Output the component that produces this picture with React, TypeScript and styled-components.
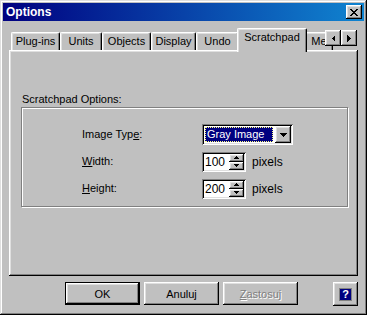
import styled, { createGlobalStyle, css } from 'styled-components'

const GlobalStyle = createGlobalStyle`
	html, body {
		margin: 0;
		padding: 0;
		background: #c0c0c0;
	}
	body {
		font-family: 'Liberation Sans', Arial, sans-serif;
		font-size: 11px;
		color: #000;
	}
`

const raised = css`
	box-shadow: inset -1px -1px #000, inset 1px 1px #fff, inset -2px -2px #808080, inset 2px 2px #dfdfdf;
`

const sunken = css`
	box-shadow: inset 1px 1px #808080, inset -1px -1px #fff, inset 2px 2px #000, inset -2px -2px #dfdfdf;
`

const tabs = [
	{ label: 'Plug-ins', width: 49 },
	{ label: 'Units', width: 42 },
	{ label: 'Objects', width: 49 },
	{ label: 'Display', width: 45 },
	{ label: 'Undo', width: 43 },
	{ label: 'Scratchpad', width: 66, active: true },
	{ label: 'Me', width: 28 },
]

export default function App() {
	return (
		<>
			<GlobalStyle />
			<Window>
				<TitleBar>
					<Title>Options</Title>
					<CloseButton>
						<svg width='8' height='7' viewBox='0 0 8 7' shapeRendering='crispEdges'>
							<path
								d='M0 0h2v1h-2zM6 0h2v1h-2zM1 1h2v1h-2zM5 1h2v1h-2zM2 2h4v1h-4zM3 3h2v1h-2zM2 4h4v1h-4zM1 5h2v1h-2zM5 5h2v1h-2zM0 6h2v1h-2zM6 6h2v1h-2z'
								fill='#000'
							/>
						</svg>
					</CloseButton>
				</TitleBar>
				<Content>
					<TabStrip>
						{tabs.map((t) => (
							<Tab key={t.label} $w={t.width} $active={t.active}>
								{t.label}
							</Tab>
						))}
						<ScrollArrows>
							<ArrowButton>
								<svg width='4' height='7' viewBox='0 0 4 7' shapeRendering='crispEdges'>
									<polygon points='4,0 4,7 0.5,3.5' fill='#000' />
								</svg>
							</ArrowButton>
							<ArrowButton>
								<svg width='4' height='7' viewBox='0 0 4 7' shapeRendering='crispEdges'>
									<polygon points='0,0 0,7 3.5,3.5' fill='#000' />
								</svg>
							</ArrowButton>
						</ScrollArrows>
					</TabStrip>
					<TabPanel>
						<GroupLabel>Scratchpad Options:</GroupLabel>
						<GroupBox>
							<FieldGrid>
								<FieldLabel>
									Image Typ<u>e</u>:
								</FieldLabel>
								<Combo>
									<ComboValue>Gray Image</ComboValue>
									<DropButton>
										<svg width='7' height='4' viewBox='0 0 7 4' shapeRendering='crispEdges'>
											<polygon points='0,0 7,0 3.5,4' fill='#000' />
										</svg>
									</DropButton>
								</Combo>
								<FieldLabel>
									<u>W</u>idth:
								</FieldLabel>
								<SpinRow>
									<Spinner>
										<SpinValue>100</SpinValue>
										<SpinButtons>
											<SpinHalf>
												<svg width='5' height='3' viewBox='0 0 5 3' shapeRendering='crispEdges'>
													<polygon points='2.5,0 5,3 0,3' fill='#000' />
												</svg>
											</SpinHalf>
											<SpinHalf>
												<svg width='5' height='3' viewBox='0 0 5 3' shapeRendering='crispEdges'>
													<polygon points='0,0 5,0 2.5,3' fill='#000' />
												</svg>
											</SpinHalf>
										</SpinButtons>
									</Spinner>
									<Unit>pixels</Unit>
								</SpinRow>
								<FieldLabel>
									<u>H</u>eight:
								</FieldLabel>
								<SpinRow>
									<Spinner>
										<SpinValue>200</SpinValue>
										<SpinButtons>
											<SpinHalf>
												<svg width='5' height='3' viewBox='0 0 5 3' shapeRendering='crispEdges'>
													<polygon points='2.5,0 5,3 0,3' fill='#000' />
												</svg>
											</SpinHalf>
											<SpinHalf>
												<svg width='5' height='3' viewBox='0 0 5 3' shapeRendering='crispEdges'>
													<polygon points='0,0 5,0 2.5,3' fill='#000' />
												</svg>
											</SpinHalf>
										</SpinButtons>
									</Spinner>
									<Unit>pixels</Unit>
								</SpinRow>
							</FieldGrid>
						</GroupBox>
					</TabPanel>
					<ButtonRow>
						<PushButton $default>OK</PushButton>
						<PushButton>Anuluj</PushButton>
						<PushButton $disabled>
							<u>Z</u>astosuj
						</PushButton>
						<HelpButton>
							<HelpGlyph>?</HelpGlyph>
						</HelpButton>
					</ButtonRow>
				</Content>
			</Window>
		</>
	)
}

const Window = styled.div`
	width: 367px;
	height: 315px;
	box-sizing: border-box;
	padding: 3px;
	background: #c0c0c0;
	display: flex;
	flex-direction: column;
	box-shadow: inset -1px -1px #000, inset 1px 1px #dfdfdf, inset -2px -2px #808080, inset 2px 2px #fff;
`

const TitleBar = styled.div`
	height: 18px;
	display: flex;
	align-items: center;
	padding: 0 2px 0 3px;
	background: linear-gradient(90deg, #000080, #1084d0);
`

const Title = styled.span`
	color: #fff;
	font-weight: bold;
	font-size: 12px;
`

const CloseButton = styled.div`
	margin-left: auto;
	width: 16px;
	height: 14px;
	background: #c0c0c0;
	display: flex;
	align-items: center;
	justify-content: center;
	${raised}
`

const Content = styled.div`
	flex: 1;
	display: flex;
	flex-direction: column;
	padding: 7px 6px 0;
`

const TabStrip = styled.div`
	position: relative;
	z-index: 1;
	height: 24px;
	margin-bottom: -2px;
	display: flex;
	align-items: flex-start;
	padding-left: 2px;
	overflow: hidden;
`

const Tab = styled.div<{ $w: number; $active?: boolean }>`
	flex: none;
	box-sizing: border-box;
	width: ${({ $w, $active }) => ($active ? $w + 4 : $w)}px;
	height: ${({ $active }) => ($active ? 24 : 18)}px;
	margin-top: ${({ $active }) => ($active ? 0 : 4)}px;
	margin-left: ${({ $active }) => ($active ? -2 : 0)}px;
	margin-right: ${({ $active }) => ($active ? -2 : 0)}px;
	position: relative;
	z-index: ${({ $active }) => ($active ? 2 : 1)};
	background: #c0c0c0;
	border-left: 1px solid #fff;
	border-top: 1px solid #fff;
	border-right: 1px solid #000;
	border-radius: 2px 2px 0 0;
	box-shadow: inset -1px 0 #808080, inset 1px 1px #dfdfdf;
	text-align: center;
	padding-top: 2px;
	line-height: 13px;
	white-space: nowrap;
`

const ScrollArrows = styled.div`
	position: absolute;
	right: 1px;
	top: 2px;
	z-index: 3;
	display: flex;
`

const ArrowButton = styled.div`
	width: 16px;
	height: 16px;
	background: #c0c0c0;
	display: flex;
	align-items: center;
	justify-content: center;
	${raised}
`

const TabPanel = styled.div`
	box-sizing: border-box;
	height: 226px;
	padding: 43px 10px 0 12px;
	box-shadow: inset -1px -1px #000, inset 1px 1px #fff, inset -2px -2px #808080, inset 2px 2px #dfdfdf;
`

const GroupLabel = styled.div`
	line-height: 13px;
	margin-bottom: 1px;
	padding-left: 1px;
`

const GroupBox = styled.div`
	box-sizing: border-box;
	height: 100px;
	border: 1px solid #808080;
	box-shadow: inset 1px 1px #fff, 1px 1px #fff;
	padding: 16px 0 0 60px;
`

const FieldGrid = styled.div`
	display: grid;
	grid-template-columns: 120px auto;
	grid-auto-rows: 21px;
	row-gap: 6px;
	align-items: center;
	justify-items: start;
`

const FieldLabel = styled.div`
	line-height: 13px;
`

const Combo = styled.div`
	box-sizing: border-box;
	width: 91px;
	height: 21px;
	padding: 2px;
	background: #fff;
	display: flex;
	${sunken}
`

const ComboValue = styled.div`
	flex: 1;
	margin: 1px 2px 1px 1px;
	box-sizing: border-box;
	background: #000080;
	color: #fff;
	border: 1px dotted #ffff80;
	padding-left: 1px;
	line-height: 13px;
`

const DropButton = styled.div`
	width: 16px;
	height: 17px;
	background: #c0c0c0;
	display: flex;
	align-items: center;
	justify-content: center;
	${raised}
`

const SpinRow = styled.div`
	display: flex;
	align-items: center;
`

const Spinner = styled.div`
	box-sizing: border-box;
	width: 44px;
	height: 20px;
	padding: 2px;
	background: #fff;
	display: flex;
	${sunken}
`

const SpinValue = styled.div`
	flex: 1;
	padding-left: 1px;
	font-size: 12px;
	line-height: 16px;
`

const SpinButtons = styled.div`
	width: 15px;
	display: flex;
	flex-direction: column;
`

const SpinHalf = styled.div`
	flex: 1;
	background: #c0c0c0;
	display: flex;
	align-items: center;
	justify-content: center;
	${raised}
`

const Unit = styled.span`
	margin-left: 6px;
	font-size: 12px;
`

const ButtonRow = styled.div`
	display: flex;
	gap: 4px;
	margin-top: 6px;
	padding-left: 56px;
`

const PushButton = styled.div<{ $default?: boolean; $disabled?: boolean }>`
	box-sizing: border-box;
	width: 75px;
	height: 23px;
	background: #c0c0c0;
	display: flex;
	align-items: center;
	justify-content: center;
	color: ${({ $disabled }) => ($disabled ? '#808080' : '#000')};
	text-shadow: ${({ $disabled }) => ($disabled ? '1px 1px #fff' : 'none')};
	${({ $default }) =>
		$default
			? css`
					border: 1px solid #000;
					box-shadow: inset -1px -1px #000, inset 1px 1px #fff, inset -2px -2px #808080, inset 2px 2px #dfdfdf;
			  `
			: raised}
`

const HelpButton = styled.div`
	margin-left: auto;
	width: 25px;
	height: 24px;
	background: #c0c0c0;
	display: flex;
	align-items: center;
	justify-content: center;
	${raised}
`

const HelpGlyph = styled.span`
	box-sizing: border-box;
	width: 13px;
	height: 13px;
	background: #000080;
	border: 1px solid #808080;
	color: #fff;
	font-weight: bold;
	font-size: 11px;
	line-height: 11px;
	text-align: center;
`
